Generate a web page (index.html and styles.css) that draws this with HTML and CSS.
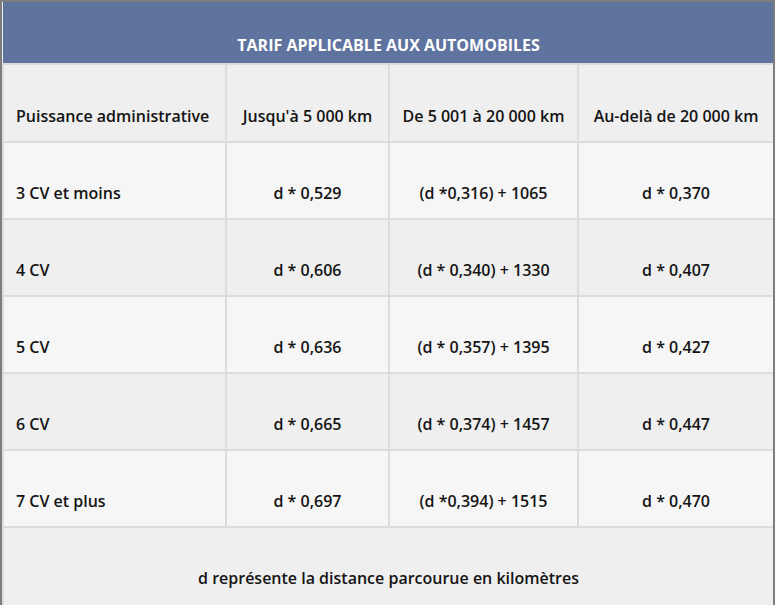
FILE: index.html
```html
<!DOCTYPE html>
<html lang="fr">
<head>
<meta charset="utf-8">
<link rel="stylesheet" href="styles.css">
</head>
<body>
<div class="frame">
<table class="tarif">
  <colgroup>
    <col class="c1"><col class="c2"><col class="c3"><col class="c4">
  </colgroup>
  <thead>
    <tr class="title-row"><th colspan="4">TARIF APPLICABLE AUX AUTOMOBILES</th></tr>
    <tr class="head-row">
      <td class="left">Puissance administrative</td>
      <td>Jusqu'à 5 000 km</td>
      <td>De 5 001 à 20 000 km</td>
      <td>Au-delà de 20 000 km</td>
    </tr>
  </thead>
  <tbody>
    <tr class="light"><td class="left">3 CV et moins</td><td>d * 0,529</td><td>(d *0,316) + 1065</td><td>d * 0,370</td></tr>
    <tr class="dark"><td class="left">4 CV</td><td>d * 0,606</td><td>(d * 0,340) + 1330</td><td>d * 0,407</td></tr>
    <tr class="light"><td class="left">5 CV</td><td>d * 0,636</td><td>(d * 0,357) + 1395</td><td>d * 0,427</td></tr>
    <tr class="dark"><td class="left">6 CV</td><td>d * 0,665</td><td>(d * 0,374) + 1457</td><td>d * 0,447</td></tr>
    <tr class="light"><td class="left">7 CV et plus</td><td>d * 0,697</td><td>(d *0,394) + 1515</td><td>d * 0,470</td></tr>
    <tr class="dark foot"><td colspan="4">d représente la distance parcourue en kilomètres</td></tr>
  </tbody>
</table>
</div>
</body>
</html>
```
FILE: styles.css
```css
html, body {
  margin: 0;
  padding: 0;
  background: #ffffff;
}
.frame {
  width: 775px;
  box-sizing: border-box;
  border-top: 2px solid #7d7d7d;
  border-left: 2px solid #7d7d7d;
  border-right: 2px solid #7d7d7d;
  height: 605px;
  overflow: hidden;
  background: #eeeeee;
}
.tarif {
  width: 771px;
  border-collapse: collapse;
  table-layout: fixed;
  font-family: "Open Sans", "Noto Sans", sans-serif;
  font-weight: 600;
  font-size: 16px;
  color: #141414;
}
.c1 { width: 223px; }
.c2 { width: 163px; }
.c3 { width: 189px; }
.c4 { width: 196px; }
.tarif td {
  border: 2px solid #dcdcdc;
  text-align: center;
  vertical-align: middle;
  padding: 39px 4px 14px;
  line-height: 22px;
  white-space: nowrap;
}
.tarif td.left {
  text-align: left;
  padding-left: 12px;
}
.title-row th {
  background: #5f739f;
  color: #ffffff;
  padding: 32px 0 7px;
  font-weight: 700;
  font-size: 16px;
  line-height: 22px;
  border: none;
}
.head-row td { background: #efefef; padding-top: 40px; padding-bottom: 14px; }
.light td { background: #f6f6f6; }
.dark td { background: #efefef; }
.foot td { padding-top: 39px; padding-bottom: 20px; }
```
